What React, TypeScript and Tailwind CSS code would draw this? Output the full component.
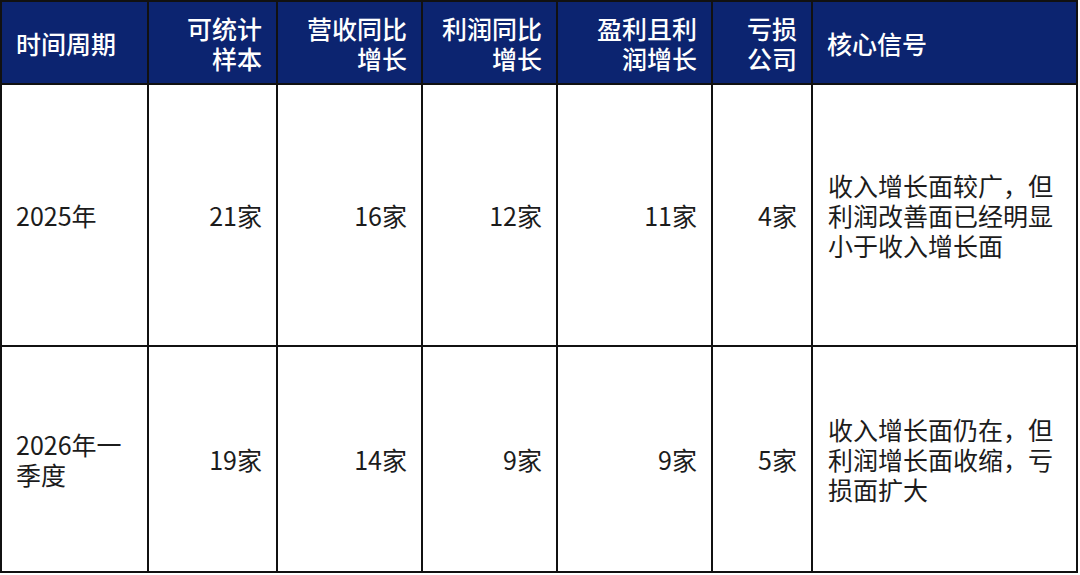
import React from "react";

type Row = {
  period: React.ReactNode;
  sample: string;
  revenue: string;
  profit: string;
  both: string;
  loss: string;
  signal: string[];
};

const rows: Row[] = [
  {
    period: "2025年",
    sample: "21家",
    revenue: "16家",
    profit: "12家",
    both: "11家",
    loss: "4家",
    signal: ["收入增长面较广，但", "利润改善面已经明显", "小于收入增长面"],
  },
  {
    period: (
      <>
        2026年一
        <br />
        季度
      </>
    ),
    sample: "19家",
    revenue: "14家",
    profit: "9家",
    both: "9家",
    loss: "5家",
    signal: ["收入增长面仍在，但", "利润增长面收缩，亏", "损面扩大"],
  },
];

const cell = "border-r-2 border-b-2 border-[#111] flex items-center";
const head = `${cell} bg-[#0c2470] text-white font-medium`;

const App = () => {
  return (
    <div
      className="w-[1080px] h-[575px] bg-white text-[25px] leading-[30px] text-[#1c1c1c]"
      style={{ fontFamily: '"Noto Sans CJK SC", "Noto Sans", sans-serif' }}
    >
      <div className="grid grid-cols-[147px_129px_145px_135px_155px_100px_265px] grid-rows-[83px_262px_226px] w-[1078px] border-l-2 border-t-2 border-[#111]">
        {/* header */}
        <div className={`${head} pl-[14px]`}>时间周期</div>
        <div className={`${head} justify-end text-right pr-[14px]`}>
          可统计
          <br />
          样本
        </div>
        <div className={`${head} justify-end text-right pr-[14px]`}>
          营收同比
          <br />
          增长
        </div>
        <div className={`${head} justify-end text-right pr-[14px]`}>
          利润同比
          <br />
          增长
        </div>
        <div className={`${head} justify-end text-right pr-[14px]`}>
          盈利且利
          <br />
          润增长
        </div>
        <div className={`${head} justify-end text-right pr-[14px]`}>
          亏损
          <br />
          公司
        </div>
        <div className={`${head} pl-[14px]`}>核心信号</div>

        {rows.map((r, i) => (
          <React.Fragment key={i}>
            <div className={`${cell} pl-[14px]`}>
              <span>{r.period}</span>
            </div>
            <div className={`${cell} justify-end pr-[14px]`}>{r.sample}</div>
            <div className={`${cell} justify-end pr-[14px]`}>{r.revenue}</div>
            <div className={`${cell} justify-end pr-[14px]`}>{r.profit}</div>
            <div className={`${cell} justify-end pr-[14px]`}>{r.both}</div>
            <div className={`${cell} justify-end pr-[14px]`}>{r.loss}</div>
            <div className={`${cell} pl-[15px]`}>
              <div>
                {r.signal.map((line) => (
                  <div key={line}>{line}</div>
                ))}
              </div>
            </div>
          </React.Fragment>
        ))}
      </div>
    </div>
  );
};

export default App;
